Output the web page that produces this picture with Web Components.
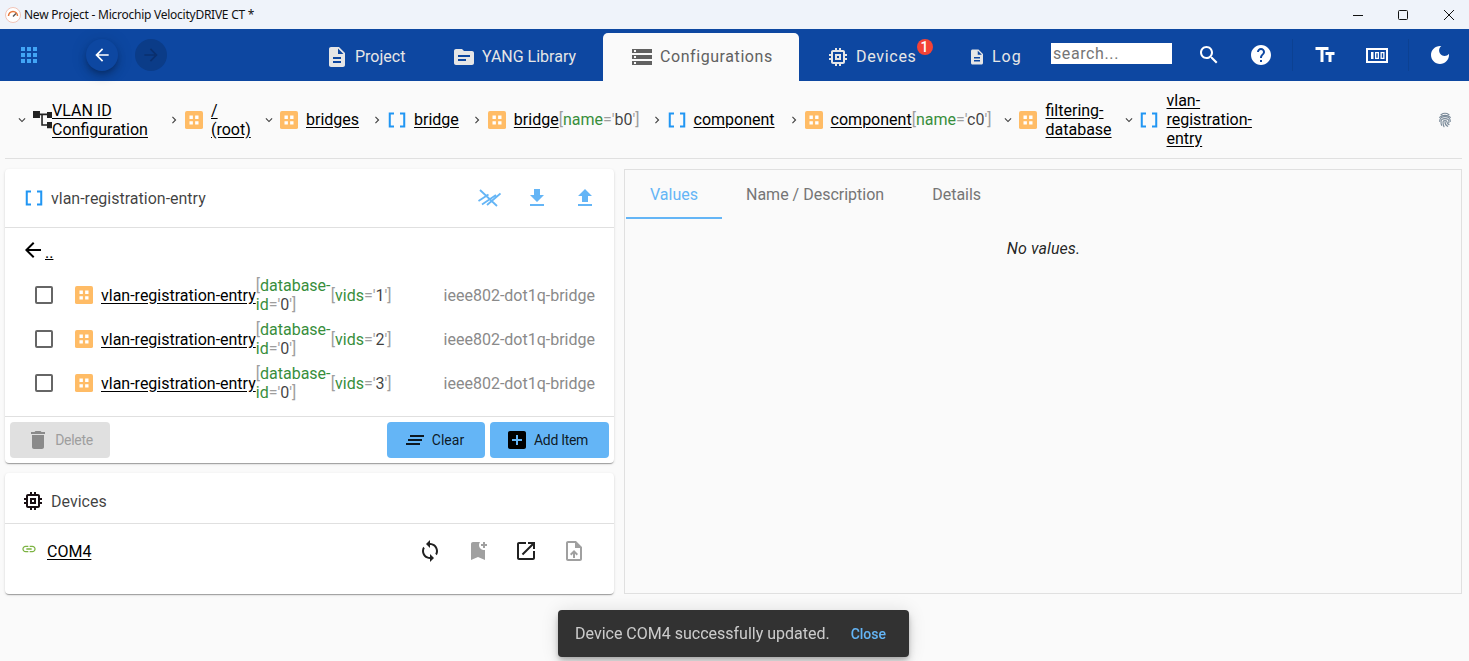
<!DOCTYPE html>
<html>
<head>
<meta charset="utf-8">
<title>New Project - Microchip VelocityDRIVE CT</title>
<style>
	html, body {
		margin: 0;
		height: 100%;
		overflow: hidden;
		background: #fafafa;
		font-family: Roboto, "Liberation Sans", sans-serif;
		font-size: 16px;
		color: rgba(0, 0, 0, .87);
	}
</style>
</head>
<body>
<app-titlebar>New Project - Microchip VelocityDRIVE CT *</app-titlebar>
<app-toolbar>
	<nav-tab slot="tabs" icon="description" width="120" pad="18" spacing="0">Project</nav-tab>
	<nav-tab slot="tabs" icon="topic" width="176" pad="25" spacing="0">YANG Library</nav-tab>
	<nav-tab slot="tabs" icon="storage" width="196" pad="27" spacing=".57" active>Configurations</nav-tab>
	<nav-tab slot="tabs" icon="memory" width="146" pad="27" spacing=".7" badge="1">Devices</nav-tab>
	<nav-tab slot="tabs" icon="description" icon-size="18" width="100" pad="23" spacing="1">Log</nav-tab>
</app-toolbar>
<bread-crumbs>
	<crumb-item chevron="down" icon="tree" text-width="104">VLAN ID Configuration</crumb-item>
	<crumb-item chevron="right" icon="grid" text-width="40">/ (root)</crumb-item>
	<crumb-item chevron="down" icon="grid">bridges</crumb-item>
	<crumb-item chevron="right" icon="brackets">bridge</crumb-item>
	<crumb-item chevron="right" icon="grid">bridge<key-attr slot="attrs" name="name" value="b0"></key-attr></crumb-item>
	<crumb-item chevron="right" icon="brackets" style="margin-left:-1px;margin-right:1px">component</crumb-item>
	<crumb-item chevron="right" icon="grid">component<key-attr slot="attrs" name="name" value="c0"></key-attr></crumb-item>
	<crumb-item chevron="down" icon="grid" text-width="66" style="margin-left:-1px">filtering-database</crumb-item>
	<crumb-item chevron="down" icon="brackets" text-width="88">vlan-registration-entry</crumb-item>
</bread-crumbs>
<work-area>
	<panel-card slot="left" class="list" style="height:294px">
		<m-icon slot="icon" name="brackets" size="18"></m-icon>
		<span slot="title">vlan-registration-entry</span>
		<m-icon slot="actions" name="waves-off" style="color:#64b5f6"></m-icon>
		<m-icon slot="actions" name="download" style="color:#64b5f6"></m-icon>
		<m-icon slot="actions" name="upload" style="color:#64b5f6"></m-icon>
		<back-row></back-row>
		<list-row vid="1"></list-row>
		<list-row vid="2"></list-row>
		<list-row vid="3"></list-row>
		<card-footer slot="footer">
			<m-button disabled icon="delete" width="100" pad="1" spacing="-.3">Delete</m-button>
			<span style="flex:1"></span>
			<m-button icon="clear_all" width="98" pad="5">Clear</m-button>
			<m-button icon="add_box" width="119" pad="6" spacing="-.3">Add Item</m-button>
		</card-footer>
	</panel-card>
	<panel-card slot="left" head="50" head-top="6" style="height:121px">
		<m-icon slot="icon" name="memory" size="24" style="margin-left:-4px;margin-right:-2px;color:#1a1014"></m-icon>
		<span slot="title">Devices</span>
		<device-row>COM4</device-row>
	</panel-card>
	<tab-panel slot="right"></tab-panel>
</work-area>
<snack-bar action="Close">Device COM4 successfully updated.</snack-bar>

<script>
	// material icon paths, plus a few custom ones drawn by hand
	const ICONS = {
		apps: '<path d="M4 8h4V4H4v4zm6 12h4v-4h-4v4zm-6 0h4v-4H4v4zm0-6h4v-4H4v4zm6 0h4v-4h-4v4zm6-10v4h4V4h-4zm-6 4h4V4h-4v4zm6 6h4v-4h-4v4zm0 6h4v-4h-4v4z"/>',
		arrow_back: '<path d="M20 11H7.83l5.59-5.59L12 4l-8 8 8 8 1.41-1.41L7.83 13H20v-2z"/>',
		arrow_forward: '<path d="M12 4l-1.41 1.41L16.17 11H4v2h12.17l-5.58 5.59L12 20l8-8z"/>',
		description: '<path d="M14 2H6c-1.1 0-1.99.9-1.99 2L4 20c0 1.1.89 2 1.99 2H18c1.1 0 2-.9 2-2V8l-6-6zm2 16H8v-2h8v2zm0-4H8v-2h8v2zm-3-5V3.5L18.5 9H13z"/>',
		topic: '<path d="M20 6h-8l-2-2H4c-1.1 0-1.99.9-1.99 2L2 18c0 1.1.9 2 2 2h16c1.1 0 2-.9 2-2V8c0-1.1-.9-2-2-2zm-6 10H6v-2h8v2zm4-4H6v-2h12v2z"/>',
		storage: '<path d="M2 20h20v-4H2v4zm2-3h2v2H4v-2zM2 4v4h20V4H2zm4 3H4V5h2v2zm-4 7h20v-4H2v4zm2-3h2v2H4v-2z"/>',
		memory: '<path d="M15 9H9v6h6V9zm-2 4h-2v-2h2v2zm8-2V9h-2V7c0-1.1-.9-2-2-2h-2V3h-2v2h-2V3H9v2H7c-1.1 0-2 .9-2 2v2H3v2h2v2H3v2h2v2c0 1.1.9 2 2 2h2v2h2v-2h2v2h2v-2h2c1.1 0 2-.9 2-2v-2h2v-2h-2v-2h2zm-4 6H7V7h10v10z"/>',
		search: '<path d="M15.5 14h-.79l-.28-.27C15.41 12.59 16 11.11 16 9.5 16 5.91 13.09 3 9.5 3S3 5.91 3 9.5 5.91 16 9.5 16c1.61 0 3.09-.59 4.23-1.57l.27.28v.79l5 4.99L20.49 19l-4.99-5zm-6 0C7.01 14 5 11.99 5 9.5S7.01 5 9.5 5 14 7.01 14 9.5 11.99 14 9.5 14z"/>',
		help: '<path d="M12 2C6.48 2 2 6.48 2 12s4.48 10 10 10 10-4.48 10-10S17.52 2 12 2zm1 17h-2v-2h2v2zm2.07-7.75l-.9.92C13.45 12.9 13 13.5 13 15h-2v-.5c0-1.1.45-2.1 1.17-2.83l1.24-1.26c.37-.36.59-.86.59-1.41 0-1.1-.9-2-2-2s-2 .9-2 2H8c0-2.21 1.79-4 4-4s4 1.79 4 4c0 .88-.36 1.68-.93 2.25z"/>',
		text_fields: '<path d="M2.5 4v3h5v12h3V7h5V4h-13zm19 5h-9v3h3v7h3v-7h3V9z"/>',
		counter: '<path fill-rule="evenodd" d="M1 5h22v15H1zm2 2v11h18V7z"/><path d="M6 9h2.5v7H6z"/><path fill-rule="evenodd" d="M10 9h4v7h-4zm1.3 1.3v4.4h1.4v-4.4zM15.5 9h4v7h-4zm1.3 1.3v4.4h1.4v-4.4z"/>',
		dark_mode: '<path d="M12 3c-4.97 0-9 4.03-9 9s4.03 9 9 9 9-4.03 9-9c0-.46-.04-.92-.1-1.36-.98 1.37-2.58 2.26-4.4 2.26-2.98 0-5.4-2.42-5.4-5.4 0-1.81.89-3.42 2.26-4.4-.44-.06-.9-.1-1.36-.1z"/>',
		expand_more: '<path d="M16.59 8.59L12 13.17 7.41 8.59 6 10l6 6 6-6z"/>',
		chevron_right: '<path d="M10 6L8.59 7.41 13.17 12l-4.58 4.59L10 18l6-6z"/>',
		download: '<path d="M19 9h-4V3H9v6H5l7 7 7-7zM5 18v2h14v-2H5z"/>',
		upload: '<path d="M9 16h6v-6h4l-7-7-7 7h4zm-4 2h14v2H5z"/>',
		delete: '<path d="M6 19c0 1.1.9 2 2 2h8c1.1 0 2-.9 2-2V7H6v12zM19 4h-3.5l-1-1h-5l-1 1H5v2h14V4z"/>',
		clear_all: '<path d="M5 13h14v-2H5v2zm-2 4h14v-2H3v2zM7 7v2h14V7H7z"/>',
		add_box: '<path d="M19 3H5c-1.11 0-2 .9-2 2v14c0 1.1.89 2 2 2h14c1.1 0 2-.9 2-2V5c0-1.1-.9-2-2-2zm-2 10h-4v4h-2v-4H7v-2h4V7h2v4h4v2z" fill="#000"/>',
		link: '<path d="M3.9 12c0-1.71 1.39-3.1 3.1-3.1h4V7H7c-2.76 0-5 2.24-5 5s2.24 5 5 5h4v-1.9H7c-1.71 0-3.1-1.39-3.1-3.1zM8 13h8v-2H8v2zm9-6h-4v1.9h4c1.71 0 3.1 1.39 3.1 3.1s-1.39 3.1-3.1 3.1h-4V17h4c2.76 0 5-2.24 5-5s-2.24-5-5-5z"/>',
		sync: '<path d="M12 4V1L8 5l4 4V6c3.31 0 6 2.69 6 6 0 1.01-.25 1.97-.7 2.8l1.46 1.46C19.54 15.03 20 13.57 20 12c0-4.42-3.58-8-8-8zm0 14c-3.31 0-6-2.69-6-6 0-1.01.25-1.97.7-2.8L5.24 7.74C4.46 8.97 4 10.43 4 12c0 4.42 3.58 8 8 8v3l4-4-4-4v3z"/>',
		bookmark_add: '<path d="M21 7h-2v2h-2V7h-2V5h2V3h2v2h2v2zm-2 14l-7-3-7 3V5c0-1.1.9-2 2-2h7c-.63.84-1 1.87-1 3 0 2.76 2.24 5 5 5 .34 0 .67-.03 1-.1V21z"/>',
		open_in_new: '<path d="M19 19H5V5h7V3H5c-1.11 0-2 .9-2 2v14c0 1.1.89 2 2 2h14c1.1 0 2-.9 2-2v-7h-2v7zM14 3v2h3.59l-9.83 9.83 1.41 1.41L19 6.41V10h2V3h-7z"/>',
		upload_file: '<path d="M14 2H6c-1.1 0-1.99.9-1.99 2L4 20c0 1.1.89 2 1.99 2H18c1.1 0 2-.9 2-2V8l-6-6zm4 18H6V4h7v5h5v11zM8 15.01l1.41 1.41L11 14.84V19h2v-4.16l1.59 1.59L16 15.01 12.01 11 8 15.01z"/>',
		fingerprint: '<g fill="none" stroke="currentColor" stroke-width="1.7" stroke-linecap="round"><path d="M6 4c3.500-2.400 8.500-2.400 12 0"/><path d="M4 8c3.500-4 12.500-4 16 0"/><path d="M4 14c0-9.500 16-9.500 16 0"/><path d="M7 20c-1-2-1-4-1-5.500 0-6 12-6 12 0 0 1 0 2-1 2"/><path d="M10.500 22c-1-2-1.500-4-1.500-7 0-3 6-3 6 0 0 2 1 3.500 3 4"/><path d="M12 14.500c0 3 1 5.500 4 7"/></g>',
		brackets: '<path d="M1 2h7v2.700H3.700v14.600H8V22H1zM23 2h-7v2.700h4.300v14.600H16V22h7z" fill="#2196f3"/>',
		grid: '<rect width="24" height="24" rx="2.500" fill="#ffbc66"/><path d="M6 6h4.500v4.500H6zM13.500 6H18v4.500h-4.500zM6 13.500h4.500V18H6zM13.500 13.500H18V18h-4.500z" fill="#fff"/>',
		tree: '<path d="M0 1.300h8.800V10H0zM17.700 2.500H24V10h-6.300zM17.700 15H24v8h-6.300z" fill="#222"/><path d="M8 5.500h10M11.400 6v13h7" fill="none" stroke="#222" stroke-width="2"/>',
		'waves-off': '<path d="M3 4l17 16M1.500 15l10-6.500M5 18.500L19 9M10 19L23.500 7.500" fill="none" stroke="currentColor" stroke-width="1.800"/>'
	};

	class MIcon extends HTMLElement {
		constructor () {
			super();
			this.attachShadow({mode: 'open'});
		};

		connectedCallback () {
			const size = this.getAttribute('size') || 24;
			const name = this.getAttribute('name');

			this.shadowRoot.innerHTML = `
				<style>
					:host { display: inline-flex; flex: none; width: ${size}px; height: ${size}px; }
					svg { display: block; width: 100%; height: 100%; fill: currentColor; }
				</style>
				<svg viewBox="0 0 24 24">${ICONS[name] || ''}</svg>`;
		};
	};

	class AppTitlebar extends HTMLElement {
		constructor () {
			super();
			this.attachShadow({mode: 'open'}).innerHTML = `
				<style>
					:host { display: flex; align-items: center; height: 29px; background: #eff3fa; font: 12px "Noto Sans", "Liberation Sans", sans-serif; color: #111; }
					.logo { margin: 0 3px 0 5px; }
					.title { flex: 1; letter-spacing: -.25px; }
					.ctl { width: 45px; height: 29px; display: flex; align-items: center; justify-content: center; }
					.ctl svg { width: 10px; height: 10px; fill: none; stroke: #111; stroke-width: 1; }
				</style>
				<svg class="logo" width="16" height="16" viewBox="0 0 16 16">
					<circle cx="8" cy="8" r="7.500" fill="#fff" stroke="#f0c4b8"/>
					<path d="M3.500 9a4.500 4.500 0 0 1 9 0" fill="none" stroke="#e5783c" stroke-width="1.500"/>
					<path d="M8 9.500l3-3" stroke="#555" stroke-width="1.500"/>
				</svg>
				<span class="title"><slot></slot></span>
				<span class="ctl"><svg viewBox="0 0 10 10"><path d="M0 5.500h10"/></svg></span>
				<span class="ctl"><svg viewBox="0 0 10 10"><rect x=".5" y=".5" width="9" height="9" rx="1"/></svg></span>
				<span class="ctl" style="margin:0 -2px 0 1px"><svg viewBox="0 0 10 10"><path d="M0 0l10 10M10 0L0 10"/></svg></span>`;
		};
	};

	class AppToolbar extends HTMLElement {
		constructor () {
			super();
			this.attachShadow({mode: 'open'}).innerHTML = `
				<style>
					:host { display: flex; align-items: center; height: 52px; background: #0d47a1; color: #fff; padding-right: 3px; box-sizing: border-box; }
					.apps { width: 58px; display: flex; justify-content: center; color: #42a5f5; }
					.fab { width: 32px; height: 32px; border-radius: 50%; display: flex; align-items: center; justify-content: center; background: #0d47a1; }
					.fab.back { margin-left: 28px; box-shadow: 0 3px 5px -1px rgba(0,0,0,.2), 0 6px 10px 0 rgba(0,0,0,.14), 0 1px 18px 0 rgba(0,0,0,.12); }
					.fab.fwd { margin-left: 17px; background: #0b3c88; color: #0a2f6e; }
					.tabs { flex: 1; display: flex; justify-content: flex-end; align-self: stretch; align-items: flex-end; }
					input { margin: 0 0 0 6px; width: 121px; height: 21px; box-sizing: border-box; border: 0; padding: 0 2px; font: 16px Roboto, sans-serif; letter-spacing: .6px; position: relative; top: -2px; background: #fff; }
					input::placeholder { color: #757575; opacity: 1; }
					.btn { width: 52px; display: flex; justify-content: center; }
					.sep { width: 1px; height: 32px; background: #0c4192; margin: 0 5px; }
				</style>
				<span class="apps"><m-icon name="apps"></m-icon></span>
				<span class="fab back"><m-icon name="arrow_back" size="20"></m-icon></span>
				<span class="fab fwd"><m-icon name="arrow_forward" size="20"></m-icon></span>
				<span class="tabs"><slot name="tabs"></slot></span>
				<input placeholder="search...">
				<span class="btn" style="margin-left:11px"><m-icon name="search"></m-icon></span>
				<span class="btn"><m-icon name="help"></m-icon></span>
				<span class="sep"></span>
				<span class="btn" style="margin-left:1px"><m-icon name="text_fields"></m-icon></span>
				<span class="btn"><m-icon name="counter"></m-icon></span>
				<span class="sep"></span>
				<span class="btn"><m-icon name="dark_mode"></m-icon></span>`;
		};
	};

	class NavTab extends HTMLElement {
		constructor () {
			super();
			this.attachShadow({mode: 'open'});
		};

		connectedCallback () {
			const badge = this.getAttribute('badge');

			this.shadowRoot.innerHTML = `
				<style>
					:host { display: flex; align-items: center; gap: 6px; height: 52px; box-sizing: border-box; width: ${this.getAttribute('width')}px; padding: 4px 0 0 ${this.getAttribute('pad')}px; color: #e6e6e6; font-size: 16px; position: relative; }
					:host([active]) { height: 48px; padding-top: 0; background: #fafafa; color: #616161; border-radius: 5px 5px 0 0; }
					.label { position: relative; top: -1px; letter-spacing: ${this.getAttribute('spacing')}px; }
					.badge { position: absolute; right: -16px; top: -8px; width: 16px; height: 16px; border-radius: 50%; background: #f44336; color: #fff; font-size: 14px; font-weight: 500; line-height: 16px; text-align: center; letter-spacing: 0; }
				</style>
				<m-icon name="${this.getAttribute('icon')}" size="${this.getAttribute('icon-size') || 24}"></m-icon>
				<span class="label"><slot></slot>${badge ? `<span class="badge">${badge}</span>` : ''}</span>`;
		};
	};

	class BreadCrumbs extends HTMLElement {
		constructor () {
			super();
			this.attachShadow({mode: 'open'}).innerHTML = `
				<style>
					:host { display: flex; align-items: center; gap: 7px; height: 77px; margin: 0 7px 0 5px; padding: 0 0 0 6px; border-bottom: 1px solid #e0e0e0; }
					.print { margin-left: auto; margin-right: 9px; color: #7a8a99; }
				</style>
				<slot></slot>
				<m-icon class="print" name="fingerprint" size="16"></m-icon>`;
		};
	};

	class CrumbItem extends HTMLElement {
		constructor () {
			super();
			this.attachShadow({mode: 'open'});
		};

		connectedCallback () {
			const down = this.getAttribute('chevron') === 'down';
			const icon = this.getAttribute('icon');
			const width = this.getAttribute('text-width');
			const iconSize = icon === 'tree' ? 19 : 18;

			this.shadowRoot.innerHTML = `
				<style>
					:host { display: flex; align-items: center; line-height: 19px; }
					.chev { width: 22px; display: flex; justify-content: center; margin-right: 0; color: #444; }
					.gap { width: ${icon === 'tree' ? 0 : 8}px; }
					.wrap { text-decoration: underline; text-underline-offset: 2px; color: #000; }
					.row { display: flex; align-items: center; ${width ? `width: ${width}px;` : ''} }
				</style>
				<span class="chev"><m-icon name="${down ? 'expand_more' : 'chevron_right'}" size="14"></m-icon></span>
				<m-icon name="${icon}" size="${iconSize}"></m-icon>
				<span class="gap"></span>
				<span class="row"><span class="wrap"><slot></slot></span><slot name="attrs"></slot></span>`;
		};
	};

	class KeyAttr extends HTMLElement {
		constructor () {
			super();
			this.attachShadow({mode: 'open'});
		};

		connectedCallback () {
			const name = this.getAttribute('name')
				.split(/(?<=-)/)
				.map(part => `<span class="k">${part}</span>`)
				.join('');

			this.shadowRoot.innerHTML = `
				<style>
					:host { display: inline-block; color: #9e9e9e; line-height: 19px; }
					.k { color: #388e3c; }
					.v { color: rgba(0, 0, 0, .75); }
				</style>[${name}='<span class="v">${this.getAttribute('value')}</span>']`;
		};
	};

	class WorkArea extends HTMLElement {
		constructor () {
			super();
			this.attachShadow({mode: 'open'}).innerHTML = `
				<style>
					:host { display: flex; gap: 10px; padding: 10px 7px 0 5px; height: 425px; }
					.left { width: 609px; display: flex; flex-direction: column; gap: 10px; flex: none; }
					.right { flex: 1; display: flex; }
				</style>
				<div class="left"><slot name="left"></slot></div>
				<div class="right"><slot name="right"></slot></div>`;
		};
	};

	class PanelCard extends HTMLElement {
		constructor () {
			super();
			this.attachShadow({mode: 'open'});
		};

		connectedCallback () {
			const head = this.getAttribute('head') || 58;
			const top = this.getAttribute('head-top') || 0;

			this.shadowRoot.innerHTML = `
				<style>
					:host { display: flex; flex-direction: column; box-sizing: border-box; background: #fff; border-radius: 4px; box-shadow: 0 2px 1px -1px rgba(0,0,0,.2), 0 1px 1px 0 rgba(0,0,0,.14), 0 1px 3px 0 rgba(0,0,0,.12); }
					header { display: flex; align-items: center; height: ${head - top}px; flex: none; padding: ${top}px 17px 0 20px; border-bottom: 1px solid #e0e0e0; }
					.title { flex: 1; margin-left: 8px; color: rgba(0, 0, 0, .75); }
					.actions { display: flex; gap: 24px; }
					.body { flex: 1; }
				</style>
				<header>
					<slot name="icon"></slot>
					<span class="title"><slot name="title"></slot></span>
					<span class="actions"><slot name="actions"></slot></span>
				</header>
				<div class="body"><slot></slot></div>
				<slot name="footer"></slot>`;
		};
	};

	class BackRow extends HTMLElement {
		constructor () {
			super();
			this.attachShadow({mode: 'open'}).innerHTML = `
				<style>
					:host { display: flex; align-items: center; height: 45px; padding-left: 16px; color: #000; }
					m-icon { margin-top: -2px; }
					u { font-size: 16px; margin-top: 4px; }
				</style>
				<m-icon name="arrow_back"></m-icon><u>..</u>`;
		};
	};

	class ListRow extends HTMLElement {
		constructor () {
			super();
			this.attachShadow({mode: 'open'});
		};

		connectedCallback () {
			this.shadowRoot.innerHTML = `
				<style>
					:host { display: flex; align-items: center; height: 44px; padding: 0 19px 0 30px; }
					.box { width: 14px; height: 14px; border: 2px solid #666; border-radius: 2px; flex: none; margin-right: 22px; }
					m-icon { margin-right: 8px; }
					u { text-underline-offset: 2px; color: #000; }
					.db { width: 75px; flex: none; }
					.mod { margin-left: auto; color: #8a8a8a; }
				</style>
				<span class="box"></span>
				<m-icon name="grid" size="18"></m-icon>
				<u>vlan-registration-entry</u>
				<key-attr class="db" name="database-id" value="0"></key-attr>
				<key-attr name="vids" value="${this.getAttribute('vid')}"></key-attr>
				<span class="mod">ieee802-dot1q-bridge</span>`;
		};
	};

	class CardFooter extends HTMLElement {
		constructor () {
			super();
			this.attachShadow({mode: 'open'}).innerHTML = `
				<style>
					:host { display: flex; gap: 5px; height: 47px; box-sizing: border-box; padding: 5px; border-top: 1px solid #e0e0e0; }
				</style>
				<slot></slot>`;
		};
	};

	class MButton extends HTMLElement {
		constructor () {
			super();
			this.attachShadow({mode: 'open'});
		};

		connectedCallback () {
			this.shadowRoot.innerHTML = `
				<style>
					:host { display: flex; align-items: center; justify-content: center; gap: 5px; box-sizing: border-box; padding-right: ${this.getAttribute('pad') || 0}px; width: ${this.getAttribute('width')}px; height: 36px; border-radius: 4px; background: #64b5f6; color: rgba(0, 0, 0, .87); font-size: 14px; letter-spacing: ${this.getAttribute('spacing') || 0}px; }
					:host([disabled]) { background: #e0e0e0; color: #9e9e9e; }
					:host([disabled]) m-icon { color: #8a8a8a; }
				</style>
				<m-icon name="${this.getAttribute('icon')}"></m-icon>
				<span><slot></slot></span>`;
		};
	};

	class DeviceRow extends HTMLElement {
		constructor () {
			super();
			this.attachShadow({mode: 'open'}).innerHTML = `
				<style>
					:host { display: flex; align-items: center; height: 54px; padding: 0 28px 0 16px; }
					.lnk { color: #7cb342; margin: -4px 10px 0 0; }
					u { flex: 1; color: #000; text-underline-offset: 2px; }
					.actions { display: flex; gap: 24px; }
					.off { color: #a0a0a0; }
				</style>
				<m-icon class="lnk" name="link" size="16"></m-icon>
				<u><slot></slot></u>
				<span class="actions">
					<m-icon name="sync"></m-icon>
					<m-icon class="off" name="bookmark_add"></m-icon>
					<m-icon name="open_in_new"></m-icon>
					<m-icon class="off" name="upload_file"></m-icon>
				</span>`;
		};
	};

	class TabPanel extends HTMLElement {
		constructor () {
			super();
			this.attachShadow({mode: 'open'}).innerHTML = `
				<style>
					:host { flex: 1; display: block; box-sizing: border-box; border: 1px solid #e0e0e0; padding-left: 1px; }
					.tabs { display: flex; height: 49px; }
					.tab { padding: 0 24px; line-height: 49px; color: #757575; box-sizing: border-box; }
					.tab.on { color: #64b5f6; border-bottom: 2px solid #64b5f6; }
					p { margin: 20px 0 0; text-align: center; font-style: italic; line-height: 19px; letter-spacing: .1px; }
				</style>
				<div class="tabs">
					<span class="tab on">Values</span>
					<span class="tab">Name / Description</span>
					<span class="tab">Details</span>
				</div>
				<p>No values.</p>`;
		};
	};

	class SnackBar extends HTMLElement {
		constructor () {
			super();
			this.attachShadow({mode: 'open'});
		};

		connectedCallback () {
			this.shadowRoot.innerHTML = `
				<style>
					:host { position: fixed; left: 558px; top: 610px; width: 351px; height: 47px; box-sizing: border-box; padding: 0 23px 0 17px; display: flex; align-items: center; justify-content: space-between; background: #323232; border-radius: 4px; color: rgba(255, 255, 255, .75); font-size: 16px; box-shadow: 0 3px 5px -1px rgba(0,0,0,.2), 0 6px 10px 0 rgba(0,0,0,.14), 0 1px 18px 0 rgba(0,0,0,.12); }
					.act { color: #64b5f6; font-size: 14px; font-weight: 500; }
				</style>
				<span><slot></slot></span>
				<span class="act">${this.getAttribute('action')}</span>`;
		};
	};

	customElements.define('m-icon', MIcon);
	customElements.define('app-titlebar', AppTitlebar);
	customElements.define('app-toolbar', AppToolbar);
	customElements.define('nav-tab', NavTab);
	customElements.define('bread-crumbs', BreadCrumbs);
	customElements.define('crumb-item', CrumbItem);
	customElements.define('key-attr', KeyAttr);
	customElements.define('work-area', WorkArea);
	customElements.define('panel-card', PanelCard);
	customElements.define('back-row', BackRow);
	customElements.define('list-row', ListRow);
	customElements.define('card-footer', CardFooter);
	customElements.define('m-button', MButton);
	customElements.define('device-row', DeviceRow);
	customElements.define('tab-panel', TabPanel);
	customElements.define('snack-bar', SnackBar);
</script>
</body>
</html>
